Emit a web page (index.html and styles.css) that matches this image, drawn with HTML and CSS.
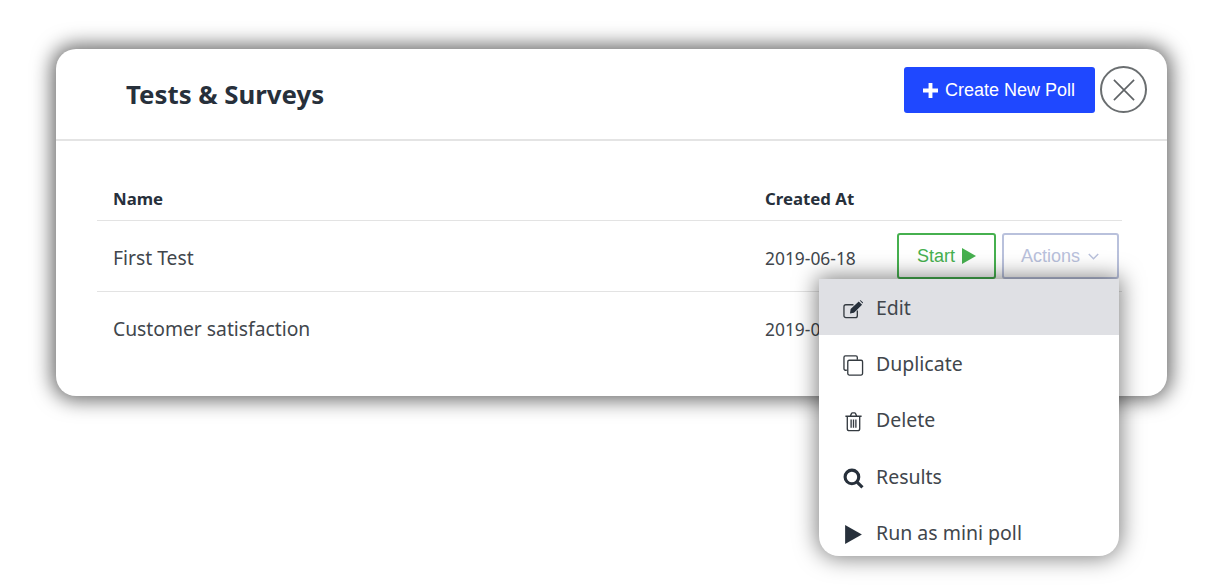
FILE: index.html
```html
<!DOCTYPE html>
<html lang="en">
<head>
    <meta charset="UTF-8">
    <meta name="viewport" content="width=device-width, initial-scale=1.0">
    <title>Tests &amp; Surveys</title>
    <link rel="stylesheet" href="styles.css">
</head>
<body>
    <div class="modal">
        <div class="modal-header">
            <h1 class="modal-title">Tests &amp; Surveys</h1>
            <a href="#" class="btn-create">
                <svg class="plus-icon" viewBox="0 0 14 14"><path d="M5.2 0h3.6v5.2H14v3.6H8.8V14H5.2V8.8H0V5.2h5.2z"/></svg>
                Create New Poll
            </a>
            <button class="btn-close" aria-label="Close">
                <svg viewBox="0 0 24 24"><path d="M1 1l22 22M23 1L1 23"/></svg>
            </button>
        </div>

        <div class="modal-body">
            <div class="poll-row poll-head">
                <span class="col-name">Name</span>
                <span class="col-date">Created At</span>
            </div>
            <div class="poll-row">
                <span class="col-name">First Test</span>
                <span class="col-date">2019-06-18</span>
                <div class="col-actions">
                    <a href="#" class="btn-start">
                        Start
                        <svg class="start-icon" viewBox="0 0 14 16"><path d="M0 0l14 8-14 8z"/></svg>
                    </a>
                    <a href="#" class="btn-actions">
                        Actions
                        <svg class="chevron-icon" viewBox="0 0 10 6"><path d="M.7.7L5 5 9.300.7"/></svg>
                    </a>
                </div>
            </div>
            <div class="poll-row">
                <span class="col-name">Customer satisfaction</span>
                <span class="col-date">2019-06-18</span>
            </div>
        </div>

        <ul class="dropdown">
            <li class="dropdown-item active">
                <svg class="item-icon" viewBox="0 0 22 20"><path class="line" d="M15 11v5.5a2 2 0 0 1-2 2H3a2 2 0 0 1-2-2V7a2 2 0 0 1 2-2h8"/><path class="fill" d="M8 9.5L16.5 1.500l3.500 3.500L11.500 13.500l-4.200.7zM17.500.700l1-.5 2.500 2.500-.5 1z"/></svg>
                Edit
            </li>
            <li class="dropdown-item">
                <svg class="item-icon" viewBox="0 0 22 22"><path class="line" d="M4 16H2.500A1.500 1.500 0 0 1 1 14.500v-12A1.500 1.500 0 0 1 2.500 1h11A1.500 1.500 0 0 1 15 2.500V5"/><rect class="line" x="5" y="5.500" width="15.500" height="15.500" rx="1.500"/></svg>
                Duplicate
            </li>
            <li class="dropdown-item">
                <svg class="item-icon" viewBox="0 0 22 22"><path class="line" d="M4.500 6v12.500a2 2 0 0 0 2 2h9a2 2 0 0 0 2-2V6M2.500 5.500h17M7.500 5.500l1.500-3a1 1 0 0 1 1-.5h2a1 1 0 0 1 1 .5l1.500 3M8.500 9v8.500M11 9v8.500M13.500 9v8.500"/></svg>
                Delete
            </li>
            <li class="dropdown-item">
                <svg class="item-icon" viewBox="0 0 20 20"><circle class="thick" cx="8.500" cy="8.500" r="6.500"/><path class="thick" d="M13.200 13.200l5.300 5.300"/></svg>
                Results
            </li>
            <li class="dropdown-item">
                <svg class="item-icon" viewBox="0 0 18 20"><path class="fill" d="M1 1l16 9-16 9z"/></svg>
                Run as mini poll
            </li>
        </ul>
    </div>
</body>
</html>
```

FILE: styles.css
```css
html {
    height: 100%;
}
body {
    font-family: "Noto Sans", "Open Sans", sans-serif;
    background-color: white;
    color: #41464c;
    box-sizing: border-box;
    min-height: 100%;
    margin: 0;
    padding: 49px 56px 0;
}
.modal {
    position: relative;
    height: 347px;
    box-sizing: border-box;
    background-color: white;
    border-radius: 20px;
    box-shadow: 0 0 20px 4px rgba(0, 0, 0, 0.6);
}
.modal-header {
    display: flex;
    align-items: center;
    height: 90px;
    padding: 0 20px 0 70px;
    border-bottom: 2px solid #e4e4e4;
}
.modal-title {
    flex: 1;
    margin: 0;
    font-size: 25.800px;
    font-weight: 700;
    color: #27303b;
}
.btn-create {
    display: flex;
    align-items: center;
    gap: 7px;
    box-sizing: border-box;
    height: 46px;
    margin-bottom: 9px;
    padding: 2px 20px 0 19px;
    background-color: #1f48ff;
    color: white;
    font-family: "Liberation Sans", Arial, sans-serif;
    font-size: 18px;
    text-decoration: none;
    border-radius: 3px;
}
.plus-icon {
    width: 15px;
    height: 15px;
    fill: white;
}
.btn-close {
    display: flex;
    align-items: center;
    justify-content: center;
    width: 47px;
    height: 47px;
    margin-left: 5px;
    margin-bottom: 9px;
    padding: 0;
    background: white;
    border: 2px solid #6a6e70;
    border-radius: 50%;
}
.btn-close svg {
    width: 22px;
    height: 22px;
    fill: none;
    stroke: #5f6366;
    stroke-width: 1.800;
}
.modal-body {
    padding: 38px 45px 0 41px;
}
.poll-row {
    display: flex;
    align-items: center;
    height: 70px;
    padding: 0 3px 0 16px;
    font-size: 19.300px;
    border-bottom: 1px solid #e3e3e3;
}
.poll-row:last-child {
    border-bottom: none;
}
.poll-head {
    height: 39px;
    padding-bottom: 2px;
    font-size: 16.800px;
    font-weight: 700;
    color: #27303b;
}
.col-name {
    width: 652px;
    flex-shrink: 0;
    padding-top: 3px;
}
.col-date {
    width: 132px;
    flex-shrink: 0;
    padding-top: 3px;
    font-size: 17.400px;
}
.poll-head .col-name {
    padding-top: 0;
}
.poll-head .col-date {
    padding-top: 0;
    font-size: 16.800px;
}
.col-actions {
    display: flex;
    gap: 6px;
}
.btn-start,
.btn-actions {
    display: flex;
    align-items: center;
    box-sizing: border-box;
    height: 46px;
    font-family: "Liberation Sans", Arial, sans-serif;
    font-size: 18px;
    text-decoration: none;
    background-color: white;
    border: 2px solid;
    border-radius: 3px;
}
.btn-start {
    width: 99px;
    gap: 7px;
    padding-left: 18px;
    color: #46b04f;
    border-color: #46b04f;
}
.start-icon {
    width: 14px;
    height: 16px;
    fill: #46b04f;
}
.btn-actions {
    width: 117px;
    gap: 8px;
    padding-left: 17px;
    color: #b9c1dc;
    border-color: #b9c1dc;
}
.chevron-icon {
    width: 11px;
    height: 7px;
    fill: none;
    stroke: #b9c1dc;
    stroke-width: 1.300;
}
.dropdown {
    position: absolute;
    top: 230px;
    left: 763px;
    width: 300px;
    height: 277px;
    margin: 0;
    padding: 0;
    overflow: hidden;
    list-style: none;
    background-color: white;
    border-radius: 0 0 20px 20px;
    box-shadow: 0 0 22px 2px rgba(0, 0, 0, 0.5);
}
.dropdown-item {
    display: flex;
    align-items: center;
    gap: 12px;
    box-sizing: border-box;
    height: 56.300px;
    padding-left: 24px;
    font-size: 19.500px;
}
.dropdown-item.active {
    background-color: #dfe0e4;
}
.item-icon {
    width: 21px;
    height: 21px;
    margin-top: 4px;
    flex-shrink: 0;
}
.item-icon .line {
    fill: none;
    stroke: #343a40;
    stroke-width: 1.400;
}
.item-icon .fill {
    fill: #27303b;
}
.item-icon .thick {
    fill: none;
    stroke: #27303b;
    stroke-width: 3;
}
```
